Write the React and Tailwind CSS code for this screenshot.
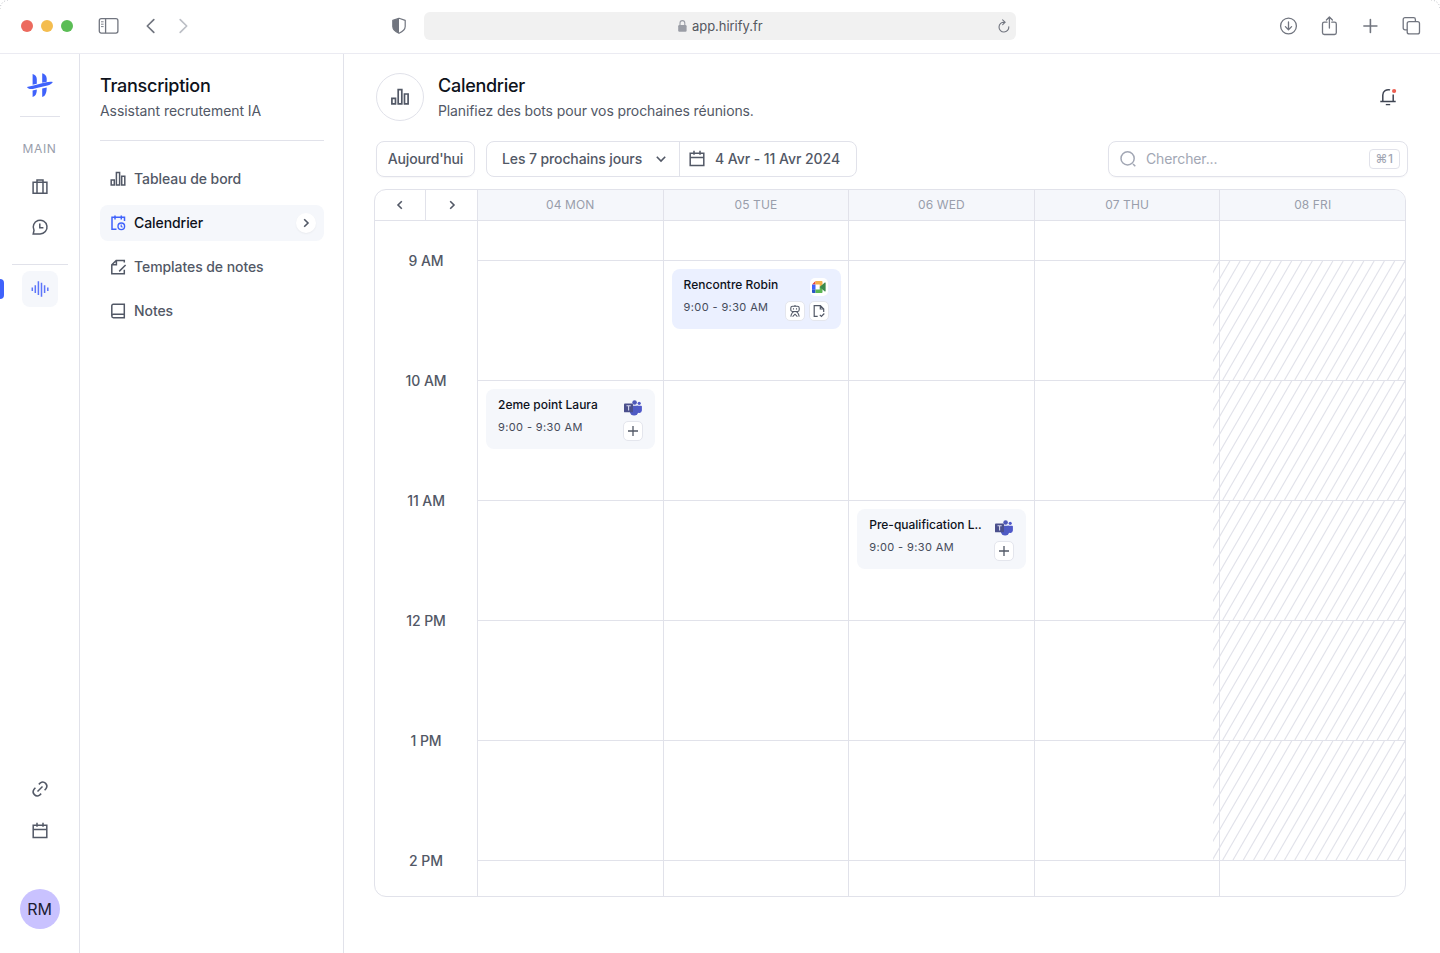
import React from "react";

function Icon({ size = 20, children, className = "", sw = 1.5 }) {
  return (
    <svg
      width={size}
      height={size}
      viewBox={`0 0 ${size} ${size}`}
      fill="none"
      stroke="currentColor"
      strokeWidth={sw}
      className={`shrink-0 ${className}`}
    >
      {children}
    </svg>
  );
}

const ChartIcon = ({ className }) => (
  <Icon className={className} sw={1.5}>
    <path d="M3.2 10.9h3.1v5H3.2zM8.4 3.6h3.2v12.300H8.4zM13.7 7.2h3.1v8.700h-3.1z" />
  </Icon>
);
const CalendarIcon = ({ className }) => (
  <Icon className={className} sw={1.5}>
    <path d="M3.2 4.2h13.6v12.2H3.2zM3.2 8.5h13.6M7 1.8v4M13 1.8v4" />
  </Icon>
);
const ScheduleIcon = ({ className }) => (
  <Icon className={className} sw={1.5}>
    <path d="M8.5 16.2H4V4.3h12.5V8M7 2.4v4M13.3 2.4v4" />
    <circle cx="13.3" cy="13.3" r="3.3" strokeWidth="1.4" />
    <path d="M13.2 11.5v2l1.3.8" strokeWidth="1.1" />
  </Icon>
);
const TemplateIcon = ({ className }) => (
  <Icon className={className}>
    <path d="M16.3 5.6V3.4H8.2L3.8 7.8v8.9h12.5v-4M8.4 3.4v4.4H3.8M17.6 8l-6.4 6.4" />
  </Icon>
);
const NotesIcon = ({ className }) => (
  <Icon className={className}>
    <path d="M16.3 3.3H5.2C4.4 3.3 3.8 3.9 3.8 4.7v10.4c0 .9.7 1.6 1.6 1.6h10.9zM16.3 13.3H5.4c-.9 0-1.6.7-1.6 1.6" />
  </Icon>
);
const Chevron = ({ dir }) => (
  <Icon size={16} sw={1.6}>
    {dir === "right" && <path d="M6.2 4.2 10 8l-3.8 3.8" />}
    {dir === "left" && <path d="M9.8 4.2 6 8l3.8 3.8" />}
    {dir === "down" && <path d="M3.800 5.800 8 10l4.200-4.200" />}
  </Icon>
);

function BrowserBar() {
  return (
    <header className="flex h-[54px] shrink-0 items-center border-b border-[#ebebf2] pr-[19px] pb-0.5 pl-[21px] text-[#71757f]">
      <div className="flex gap-2">
        <span className="size-3 rounded-full bg-[#ec6a5e]" />
        <span className="size-3 rounded-full bg-[#f4bd4f]" />
        <span className="size-3 rounded-full bg-[#5bbd55]" />
      </div>
      <svg width="22" height="18" viewBox="0 0 22 18" fill="none" stroke="currentColor" className="ml-6">
        <rect x="2.3" y="1.7" width="18.6" height="14.4" rx="2" strokeWidth="1.3" />
        <path d="M8.6 1.7v14.4" strokeWidth="1.3" />
        <path d="M4 4.8h2.6M4 7.2h2.6M4 9.6h2.6" strokeWidth="0.9" />
      </svg>
      <svg width="12" height="18" viewBox="0 0 12 18" fill="none" stroke="currentColor" strokeWidth="1.7" strokeLinecap="round" strokeLinejoin="round" className="ml-[25px]">
        <path d="M9.8 2.6 3.3 9l6.5 6.4" />
      </svg>
      <svg width="12" height="18" viewBox="0 0 12 18" fill="none" stroke="#bcbfc6" strokeWidth="1.7" strokeLinecap="round" strokeLinejoin="round" className="ml-[21px]">
        <path d="M3.2 2.6 9.7 9l-6.5 6.4" />
      </svg>
      <svg width="16" height="18" viewBox="0 0 16 18" className="ml-[202px]" fill="none">
        <path d="M8 1.2 14.2 3.4v6.2c0 3-2.6 5-6.2 6.7-3.6-1.7-6.2-3.7-6.2-6.7V3.4z" stroke="currentColor" strokeWidth="1.2" strokeLinejoin="round" />
        <path d="M8 1.2v15.1c-3.6-1.7-6.2-3.7-6.2-6.7V3.4z" fill="currentColor" />
      </svg>
      <div className="ml-[17px] flex h-7 w-[592px] items-center rounded-md bg-[#f1f1f1] pl-[253px]">
        <svg width="10" height="14" viewBox="0 0 10 14" className="text-[#9a9da5]">
          <rect x="1.2" y="6" width="8.4" height="6.8" rx="1.2" fill="currentColor" />
          <path d="M3 6.5V4a2.400 2.400 0 0 1 4.800 0v2.500" fill="none" stroke="currentColor" strokeWidth="1.1" />
        </svg>
        <span className="ml-[5px] text-[13px] leading-4 tracking-[-0.003em] text-[#55585f]">app.hirify.fr</span>
        <svg width="14" height="16" viewBox="0 0 14 16" fill="none" stroke="currentColor" strokeWidth="1.1" strokeLinecap="round" className="mr-[5px] ml-auto">
          <path d="M11.8 8.7A4.900 4.900 0 1 1 7.300 4.200M5.600 1.900l2.500 2.300-2.400 2.400" />
        </svg>
      </div>
      <div className="ml-auto flex items-center gap-[21px]">
        <Icon sw={1.3}>
          <circle cx="10.5" cy="10" r="7.9" />
          <path d="M10.5 6v7.500M7.400 10.600l3.100 3.100 3.100-3.100" strokeLinecap="round" strokeLinejoin="round" />
        </Icon>
        <Icon sw={1.3}>
          <path d="M8 6.200H5.300c-1 0-1.800.8-1.800 1.800v8.700c0 1 .8 1.800 1.800 1.800h10.200c1 0 1.800-.8 1.800-1.800V8c0-1-.8-1.800-1.800-1.800h-2.700M10.400 12V1.200M7.400 4l3-3 3 3" strokeLinecap="round" strokeLinejoin="round" />
        </Icon>
        <Icon sw={1.6}>
          <path d="M10.400 3.500v13M3.900 10h13" strokeLinecap="round" />
        </Icon>
        <Icon sw={1.3}>
          <rect x="6.2" y="5.6" width="12.3" height="12.3" rx="2" />
          <path d="M6.200 13.900H4c-1 0-1.800-.8-1.800-1.800V3.500c0-1 .8-1.800 1.800-1.800h8.600c1 0 1.800.8 1.800 1.800v2.100" />
        </Icon>
      </div>
    </header>
  );
}

function Logo() {
  return (
    <svg width="28" height="28" viewBox="0 0 28 28" className="shrink-0 text-[#3f62fb]" fill="currentColor">
      <path d="M6.600 2c2.500.6 4.200 2.300 4.200 5v4.700l-4.200 1zM16.200 1.300c2.800.7 4.500 2.600 4.500 5.200v3.200l-4.500 1zM6.600 18.600l4.200-1c0 4-1 6.500-4.200 7.500zM16.200 16.500l4.500-1c0 5-1.200 8.600-4.500 9.600z" />
      <path d="M1 15c5-1.200 10-2.300 15-3.700C19.700 10.200 24 9 26.900 10c-1.300 2.500-4.400 3.300-7.600 4-4.300.9-8.600 2-12.500 2.900-2.500.5-4.800.1-5.800-1.900z" />
    </svg>
  );
}

function Rail() {
  return (
    <aside className="flex w-20 shrink-0 flex-col items-center border-r border-[#e1e2ea] pt-[18px] pb-6 text-[#525866]">
      <Logo />
      <div className="mt-4 h-px w-10 shrink-0 bg-[#e1e2ea]" />
      <span className="mt-6 text-[12px] leading-4 tracking-[0.05em] text-[#999eab]">MAIN</span>
      <Icon className="mt-5">
        <path d="M3.100 5.300h13.800v10.900H3.100zM7 16.200V2.900h6v13.300" />
      </Icon>
      <Icon className="mt-5">
        <path d="M3.200 17h6.900a6.900 6.900 0 1 0-6.100-3.700zM9.800 6.400v4.300h3.600" />
      </Icon>
      <div className="mt-[27px] h-px w-14 shrink-0 bg-[#e1e2ea]" />
      <div className="mt-1.5 flex w-full items-center">
        <span className="h-5 w-1 rounded-r bg-[#3f62fb]" />
        <div className="ml-[18px] flex size-9 items-center justify-center rounded-lg bg-[#f5f7fb] text-[#5d75fa]">
          <Icon sw={1.5}>
            <path d="M2.300 8.400v3.500M5.300 6.200v7.800M8.400 2.200v13.800M11.500 3.800v14M14.600 6.200v7.800M17.800 8.400v3.500" />
          </Icon>
        </div>
      </div>
      <Icon className="mt-auto" sw={1.5}>
        <path d="m7.500 12.500 5-5M8.800 5.400l1.600-1.500a4.100 4.100 0 0 1 5.700 5.700l-1.500 1.600M5.400 8.800l-1.500 1.600a4.100 4.100 0 0 0 5.700 5.700l1.600-1.500" />
      </Icon>
      <CalendarIcon className="mt-[22px]" />
      <div className="mt-12 flex size-10 shrink-0 items-center justify-center rounded-full bg-[#c9c2ff] text-[16px] text-[#1c1d33]">
        RM
      </div>
    </aside>
  );
}

const NAV = [
  { label: "Tableau de bord", icon: ChartIcon },
  { label: "Calendrier", icon: ScheduleIcon, active: true },
  { label: "Templates de notes", icon: TemplateIcon },
  { label: "Notes", icon: NotesIcon },
];

function Panel() {
  return (
    <aside className="w-[264px] shrink-0 border-r border-[#e1e2ea] pt-5 pr-[19px] pl-5">
      <h2 className="text-[18px] leading-6 font-medium tracking-[-0.015em] text-[#0e121b]">Transcription</h2>
      <p className="mt-[3px] text-[14px] leading-5 tracking-[-0.004em] text-[#525866]">Assistant recrutement IA</p>
      <div className="mt-[19px] h-px bg-[#e1e2ea]" />
      <nav className="mt-5 flex flex-col gap-2">
        {NAV.map(({ label, icon: Glyph, active }) => (
          <a
            key={label}
            className={`flex h-9 items-center rounded-lg pr-2 pl-2 text-[14px] leading-5 font-medium tracking-[-0.005em] ${active ? "bg-[#f5f7fb] text-[#0e121b]" : "text-[#525866]"}`}
          >
            <Glyph className={active ? "text-[#3f62fb]" : ""} />
            <span className="ml-1.5">{label}</span>
            {active && (
              <span className="ml-auto flex size-5 items-center justify-center rounded-full bg-white text-[#525866] shadow-xs">
                <Chevron dir="right" />
              </span>
            )}
          </a>
        ))}
      </nav>
    </aside>
  );
}

const MeetIcon = () => (
  <span className="flex size-[18px] items-center justify-center rounded-[5px] bg-white">
    <svg width="14" height="12" viewBox="0 0 14 12">
      <path d="M0 3.600 3.500 0v3.600z" fill="#e94235" />
      <path d="M3.500 0h5.900c.7 0 1.100.4 1.100 1v3.200L7.700 6V3.600H3.500z" fill="#f4b04a" />
      <path d="M0 3.600h3.500v5H0z" fill="#3f62fb" />
      <path d="M0 8.600h3.500v3.400H1c-.6 0-1-.4-1-1z" fill="#2b55c9" />
      <path d="M3.500 8.600h4.200V6l2.800-2v7c0 .6-.4 1-1.100 1H3.500z" fill="#5bb654" />
      <path d="m7.700 6 5.100-4.400c.4-.3.800-.1.800.3v8.200c0 .4-.4.6-.8.300z" fill="#3d8a4c" />
    </svg>
  </span>
);
const TeamsIcon = () => (
  <svg width="18" height="16" viewBox="0 0 18 16" className="block shrink-0">
    <circle cx="15.200" cy="3.300" r="1.600" fill="#5059c9" />
    <path d="M12.500 5.700h4.600c.5 0 .8.300.8.800v4a2.900 2.900 0 0 1-5.400 1z" fill="#5059c9" />
    <circle cx="10.600" cy="2.500" r="2.300" fill="#4f59b8" />
    <path d="M6.500 5.700h7.200c.4 0 .8.300.8.800v4.600a4.400 4.400 0 0 1-8.800 0V6.500z" fill="#4f5bc4" />
    <rect x="0" y="3.500" width="9" height="8.800" rx="0.900" fill="#4a4f8c" />
    <path d="M2.500 5.800h4.200M4.600 5.800v4.600" stroke="#d5d8ee" strokeWidth="1.100" />
  </svg>
);
const MiniButton = ({ children }) => (
  <span className="flex size-5 items-center justify-center rounded-[5px] border border-[#e4e6ed] bg-white text-[#525866]">
    {children}
  </span>
);
const PlusIcon = () => (
  <Icon size={16} sw={1.3}>
    <path d="M8 3v10M3 8h10" />
  </Icon>
);
const BotIcon = () => (
  <Icon size={16} sw={1.1}>
    <rect x="3.800" y="3.300" width="8.400" height="5.200" rx="1.800" />
    <path d="M8 2v1.300M6.500 5.300v1.200M9.500 5.300v1.200M3.800 13.700c.4-2.600 2-5.200 4.200-5.200s3.800 2.600 4.200 5.200M5.600 13.700 8 11.200l2.400 2.500" />
  </Icon>
);
const FileIcon = () => (
  <Icon size={16} sw={1.2}>
    <path d="M6.700 13.300H3.200V2.700h6.200l3.300 3.200v3M9.300 2.700v3.300h3.400M8.800 11.900l1.600 1.500 2.900-2.900" />
  </Icon>
);

const HOURS = ["9 AM", "10 AM", "11 AM", "12 PM", "1 PM", "2 PM"];
const EVENTS = {
  mon: { title: "2eme point Laura", tone: "bg-[#f5f7fb]", top: "top-[168px]" },
  tue: { title: "Rencontre Robin", tone: "bg-[#ebf0ff]", top: "top-[48px]", meet: true },
  wed: { title: "Pre-qualification L..", tone: "bg-[#f5f7fb]", top: "top-[288px]" },
};
const DAYS = [
  { label: "04 MON", event: EVENTS.mon },
  { label: "05 TUE", event: EVENTS.tue },
  { label: "06 WED", event: EVENTS.wed },
  { label: "07 THU" },
  { label: "08 FRI", off: true },
];

function EventCard({ event }) {
  return (
    <div className={`absolute right-[7.400px] left-2 ${event.top} flex h-[60px] justify-between rounded-lg pr-3 pl-3 ${event.tone}`}>
      <div className="pt-2 whitespace-nowrap">
        <div className="text-[12px] leading-4 font-medium text-[#0e121b]">{event.title}</div>
        <div className="mt-1.5 text-[11px] leading-4 tracking-[0.035em] text-[#454b5a]">9:00 - 9:30 AM</div>
      </div>
      <div className="flex flex-col items-end pt-[9px]">
        <div className="flex h-[18px] w-5 items-center justify-center">
          {event.meet ? <MeetIcon /> : <span className="pt-px"><TeamsIcon /></span>}
        </div>
        <div className="mt-[5px] flex gap-1">
          {event.meet ? (
            <>
              <MiniButton><BotIcon /></MiniButton>
              <MiniButton><FileIcon /></MiniButton>
            </>
          ) : (
            <MiniButton><PlusIcon /></MiniButton>
          )}
        </div>
      </div>
    </div>
  );
}

function Hatch() {
  const lines = Array.from({ length: 28 }, (_, i) => 192 + 72.1 - i * 10.3);
  return (
    <svg width="192" height="119" viewBox="0 0 192 119" className="block" stroke="#e1e2ea" strokeWidth="1.150">
      {lines.map((x) => (
        <path key={x} d={`M${x} 0 L${x - 69} 119`} />
      ))}
    </svg>
  );
}

function Calendar() {
  return (
    <section className="-ml-[2px] flex h-[708px] w-[1032px] overflow-hidden rounded-xl border border-[#e1e2ea]">
      <div className="w-[102px] shrink-0 text-[#525866]">
        <div className="flex h-[31px] border-b border-[#e1e2ea]">
          <div className="flex w-[50px] items-center justify-center"><Chevron dir="left" /></div>
          <div className="flex flex-1 items-center justify-center border-l border-[#e1e2ea]"><Chevron dir="right" /></div>
        </div>
        <div className="pt-[30px]">
          {HOURS.map((h) => (
            <div key={h} className="h-[120px] text-center text-[14px] leading-5 font-medium tracking-[-0.005em]">{h}</div>
          ))}
        </div>
      </div>
      <div className="grid flex-1 grid-cols-5">
        {DAYS.map(({ label, event, off }) => (
          <div key={label} className="border-l border-[#e1e2ea]">
            <div className="flex h-[31px] items-center justify-center border-b border-[#e1e2ea] bg-[#f5f7fb] text-[12px] tracking-[0.01em] text-[#999eab]">
              {label}
            </div>
            <div className="relative">
              <div className="h-10 border-b border-[#e1e2ea]" />
              {[0, 1, 2, 3, 4].map((n) => (
                <div key={n} className="h-[120px] border-b border-[#e1e2ea]">
                  {off && <div className="relative -left-[7px] w-48"><Hatch /></div>}
                </div>
              ))}
              {event && <EventCard event={event} />}
            </div>
          </div>
        ))}
      </div>
    </section>
  );
}

function Main() {
  return (
    <main className="flex-1 pt-[19px] pl-8">
      <div className="flex items-center">
        <div className="flex size-12 items-center justify-center rounded-full border border-[#e1e2ea] text-[#525866]">
          <svg width="20" height="20" viewBox="0 0 20 20" fill="none" stroke="currentColor" strokeWidth="1.700">
            <path d="M1.900 11.400h3.600v5.400H1.900zM8.200 2.600h3.600v14.200H8.200zM14.500 7h3.600v9.800h-3.600z" />
          </svg>
        </div>
        <div className="ml-3.5">
          <h1 className="text-[18px] leading-6 font-medium tracking-[-0.015em] text-[#0e121b]">Calendrier</h1>
          <p className="mt-[3px] text-[14px] leading-5 tracking-[-0.008em] text-[#525866]">Planifiez des bots pour vos prochaines réunions.</p>
        </div>
        <Icon className="mr-[42px] ml-auto text-[#3f4553]" sw={1.5}>
          <path d="M12.100 2.900c-3.600-1-7.300 1.300-7.300 5.100v6M15.200 7.500v6.500M2.300 14.500h15.400" />
          <path d="M7.800 17.600h4.400" strokeWidth="1.300" />
          <circle cx="16.100" cy="4" r="2.100" fill="#ec5f52" stroke="none" />
        </Icon>
      </div>
      <div className="mt-5 flex text-[14px] leading-5 font-medium text-[#525866]">
        <button className="h-9 w-[99px] rounded-lg border border-[#e1e2ea] leading-5 tracking-[-0.012em] whitespace-nowrap shadow-[0_1px_1px_rgba(82,88,102,0.04)]">Aujourd'hui</button>
        <div className="ml-[11px] flex h-9 w-[371px] items-center rounded-lg border border-[#e1e2ea]">
          <div className="flex h-full w-[193px] items-center border-r border-[#e1e2ea] pl-[15px] whitespace-nowrap">
            <span className="w-[151px] tracking-[-0.008em]">Les 7 prochains jours</span>
            <Chevron dir="down" />
          </div>
          <CalendarIcon className="ml-[7px]" />
          <span className="ml-2 tracking-[-0.004em] whitespace-nowrap">4 Avr - 11 Avr 2024</span>
        </div>
        <div className="ml-[251px] flex h-9 w-[300px] items-center rounded-lg border border-[#e1e2ea] pr-[7px] pl-[9px] text-[#a2a7b4] shadow-[0_1px_1px_rgba(82,88,102,0.04)]">
          <Icon>
            <circle cx="9.600" cy="9.400" r="6.600" />
            <path d="m15 15 2.300 2.300" />
          </Icon>
          <span className="ml-2 font-normal tracking-[-0.008em]">Chercher...</span>
          <span className="ml-auto flex h-5 w-[31px] items-center justify-center rounded border border-[#e1e2ea] text-[12px] tracking-[0.04em]">⌘1</span>
        </div>
      </div>
      <div className="pt-3">
        <Calendar />
      </div>
    </main>
  );
}

export default function App() {
  return (
    <div className="relative flex h-[953px] w-[1440px] flex-col overflow-hidden bg-white font-['Inter',sans-serif]">
      <BrowserBar />
      <div className="flex flex-1">
        <Rail />
        <Panel />
        <Main />
      </div>
      <svg width="10" height="10" viewBox="0 0 10 10" className="absolute top-0 left-0" fill="none" stroke="#b9bbc0" strokeDasharray="1 2">
        <path d="M0 9A9 9 0 0 1 9 0" />
      </svg>
      <svg width="10" height="10" viewBox="0 0 10 10" className="absolute top-0 right-0" fill="none" stroke="#b9bbc0" strokeDasharray="1 2">
        <path d="M1 0a9 9 0 0 1 9 9" />
      </svg>
    </div>
  );
}
